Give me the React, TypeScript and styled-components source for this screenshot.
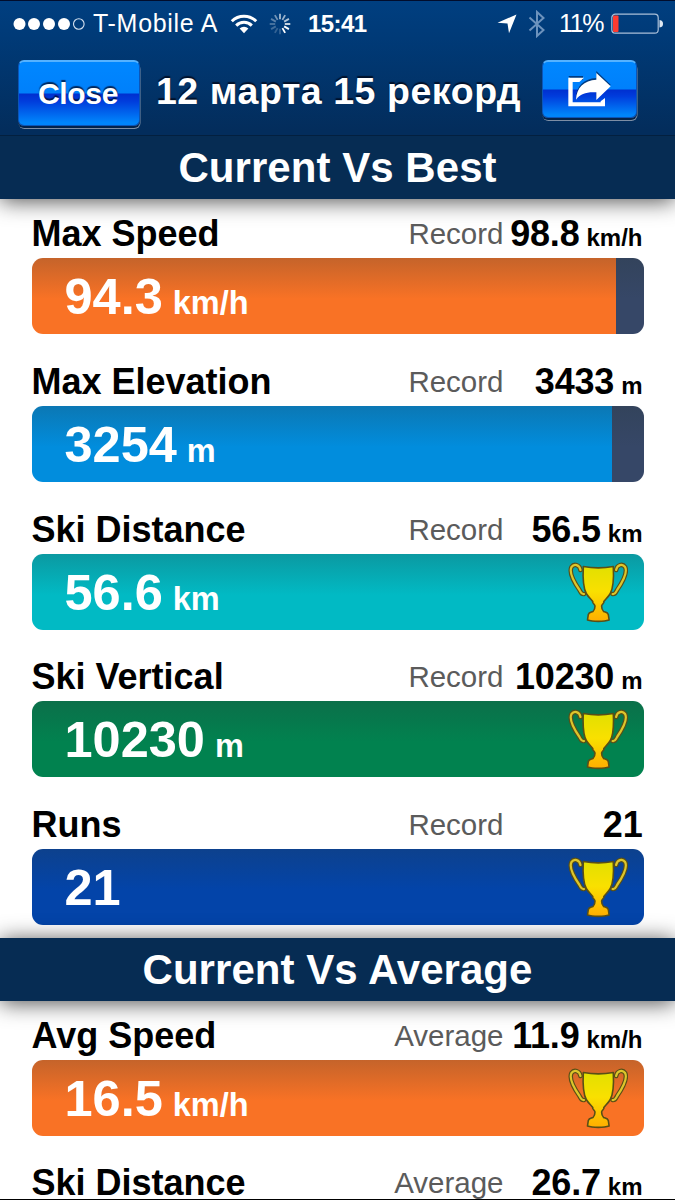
import React from 'react';
import styled, { createGlobalStyle } from 'styled-components';

const GlobalStyle = createGlobalStyle`
  * { box-sizing: border-box; }
  body { margin: 0; background: #fff; }
`;

const Screen = styled.main`
  width: 675px;
  height: 1200px;
  overflow: hidden;
  background: #fff;
  border-top: 1px solid #010d2c;
  border-bottom: 1px solid #000;
  font-family: 'Liberation Sans', Arial, sans-serif;
  display: flex;
  flex-direction: column;
`;

const TopArea = styled.header`
  flex: none;
  height: 135.4px;
  position: relative;
  z-index: 2;
  background: linear-gradient(#003f80, #003a77 28%, #032d5c 96%);
  border-bottom: 1px solid #03203f;
  color: #fff;
`;

const StatusBar = styled.div`
  height: 45px;
  display: flex;
  align-items: center;
  padding: 0 12px 0 13px;
  svg { flex: none; }
`;

const StatusText = styled.span<{ $width: number; $ml: number; $size?: number; $spacing?: number; $bold?: boolean }>`
  flex: none;
  width: ${p => p.$width}px;
  margin-left: ${p => p.$ml}px;
  font-size: ${p => p.$size ?? 25}px;
  font-weight: ${p => (p.$bold ? 700 : 400)};
  letter-spacing: ${p => p.$spacing ?? 0}px;
  white-space: nowrap;
`;

const Spacer = styled.span`
  flex: 1;
`;

const BatteryGap = styled.span`
  width: 6px;
`;

const NavBar = styled.div`
  display: flex;
  align-items: flex-start;
  padding: 14px 38px 0 18px;
`;

const GlossyButton = styled.button<{ $width: number; $height: number }>`
  flex: none;
  width: ${p => p.$width}px;
  height: ${p => p.$height}px;
  padding: 0;
  border: 1px solid #0b55b8;
  border-top: 2px solid #55b2ff;
  border-radius: 6px;
  background: linear-gradient(#0087ff 0, #0080fb 49%, #0030d0 51%, #003cdc 62%, #0085fb 96%);
  box-shadow: 0 2px 0 #04234a, 0.5px 3px 0 #7d8ea5;
  color: #fff;
  display: flex;
  align-items: center;
  justify-content: center;
  font: bold 30px 'Liberation Sans', Arial, sans-serif;
  letter-spacing: -0.3px;
  text-shadow: 0 -2px 1px rgba(0, 10, 40, 0.75);
`;

const ButtonLabel = styled.span`
  padding-right: 2px;
`;

const NavTitle = styled.h1`
  flex: 1;
  margin: 9px 0 0;
  padding-right: 5px;
  font-size: 37.5px;
  line-height: 44px;
  font-weight: 700;
  text-align: center;
  white-space: nowrap;
  letter-spacing: 0.55px;
  text-shadow: 0 -2px 1px rgba(0, 10, 30, 0.85);
`;

const SectionTitle = styled.h2`
  flex: none;
  height: 63px;
  margin: 0;
  background: #062c53;
  color: #fff;
  font-size: 42px;
  line-height: 63px;
  letter-spacing: 0.05px;
  text-align: center;
  position: relative;
  box-shadow: 0 2px 22px rgba(0, 0, 0, 0.7);
`;

const MetricList = styled.section`
  flex: none;
  padding: 9px 31.5px 13px;
  display: flex;
  flex-direction: column;
  gap: 21.6px;
`;

const MetricHead = styled.div`
  height: 50px;
  display: grid;
  grid-template-columns: 1fr auto 139px;
  align-items: baseline;
  line-height: 51.5px;
  white-space: nowrap;
  padding-right: 1px;
`;

const MetricName = styled.span`
  font-size: 36px;
  font-weight: 700;
  color: #000;
`;

const CompareLabel = styled.span`
  position: relative;
  top: -2px;
  font-size: 29.5px;
  color: #5b5b5b;
`;

const CompareValue = styled.span`
  display: flex;
  justify-content: flex-end;
  align-items: baseline;
  gap: 7px;
  font-size: 36px;
  letter-spacing: -0.2px;
  font-weight: 700;
  color: #000;
  small {
    font-size: 24px;
    letter-spacing: 0;
  }
`;

const Bar = styled.div<{ $color: string; $fill: number }>`
  height: 76px;
  border-radius: 11px;
  background:
    linear-gradient(rgba(42, 56, 58, 0.25), rgba(42, 56, 58, 0) 54%),
    linear-gradient(90deg, ${p => p.$color} ${p => p.$fill}%, #364767 ${p => p.$fill}%);
  display: flex;
  align-items: center;
  justify-content: space-between;
  padding: 0 16px 0 33px;
`;

const BarValue = styled.span`
  display: flex;
  align-items: baseline;
  gap: 10px;
  font-size: 50.5px;
  line-height: 76px;
  font-weight: 700;
  color: #fff;
  padding-top: 2px;
  small {
    font-size: 32.5px;
    line-height: 32px;
  }
`;

const SignalDots = () => (
  <svg width="73" height="14" viewBox="0 0 73 14" fill="#fff">
    {[6.5, 21, 36, 51].map(x => <circle key={x} cx={x} cy="7" r="6" />)}
    <circle cx="65.8" cy="7" r="5.3" fill="none" stroke="#d5e2f0" strokeWidth="1.1" />
  </svg>
);

const WifiSvg = styled.svg`
  margin-left: 10px;
`;

const WifiIcon = () => (
  <WifiSvg width="28" height="20" viewBox="0 0 28 20" fill="none" stroke="#fff" strokeWidth="3">
    <path d="M1.800 7.200a17.300 17.300 0 0 1 24.400 0" />
    <path d="M6.200 11.600a11 11 0 0 1 15.600 0" />
    <path d="M14 19.200l-4.400-4.600a6.200 6.200 0 0 1 8.800 0z" fill="#fff" stroke="none" />
  </WifiSvg>
);

const SpinnerSvg = styled.svg`
  margin-left: 11px;
`;

const SpinnerIcon = () => (
  <SpinnerSvg width="22" height="22" viewBox="-11 -11 22 22" stroke="#fff" strokeWidth="1.8">
    {[0.65, 0.6, 0.7, 0.85, 1, 1, 0.2, 0.2, 0.25, 0.3, 0.35, 0.45].map((o, i) => (
      <line key={i} x1="0" y1="-4.8" x2="0" y2="-10.3" opacity={o} transform={`rotate(${i * 30})`} />
    ))}
  </SpinnerSvg>
);

const LocationIcon = () => (
  <svg width="20" height="20" viewBox="0 0 20 20" fill="#fff">
    <path d="M19.500 .5L12 19.200 10.500 9.500 .5 8.700z" />
  </svg>
);

const BluetoothSvg = styled.svg`
  margin-left: 11px;
`;

const BluetoothIcon = () => (
  <BluetoothSvg width="18" height="28" viewBox="0 0 18 28" fill="none" stroke="#6d93bd" strokeWidth="2">
    <path d="M1.500 7.500l14 12.500-6.500 6V2l6.500 6-14 12.500" />
  </BluetoothSvg>
);

const BatteryIcon = () => (
  <svg width="52" height="22" viewBox="0 0 52 22">
    <rect x=".8" y="1.2" width="46.4" height="19" rx="3.5" fill="none" stroke="#a9bfd8" strokeWidth="1.2" />
    <rect x="2" y="2.4" width="5.5" height="16.6" rx="1" fill="#ff3b30" />
    <path d="M48.500 7v7.600c3-.5 3.500-2 3.500-3.800s-.5-3.300-3.500-3.800z" fill="#dfe8f2" />
  </svg>
);

const ShareIcon = () => (
  <svg width="44" height="37" viewBox="697 212 132 111">
    <g fill="#02163f" opacity=".65" transform="translate(0 -5)">
      <path d="M782 217l43 41-43 41v-23c-28-2-48 4-61 22 1-36 24-58 61-60z" />
      <path d="M698 232h44v12h-15v5h-15z" />
    </g>
    <g fill="#fff">
      <path d="M745 232h-47v86h110v-25l-13 10v3h-84v-61h20z" />
      <path d="M782 218l43 40-43 41v-23c-28-2-48 4-61 22 1-36 24-58 61-60z" />
    </g>
  </svg>
);

const TrophyIcon = () => (
  <svg width="60" height="62" viewBox="-1 -1.5 60 62">
    <defs>
      <linearGradient id="gold" x1="0" y1="0" x2="0" y2="1">
        <stop offset="0" stopColor="#e2e000" />
        <stop offset=".45" stopColor="#f9e000" />
        <stop offset="1" stopColor="#ffae00" />
      </linearGradient>
    </defs>
    {['', 'translate(58.6 0) scale(-1 1)'].map(t => (
      <g key={t} transform={t} fill="none" strokeLinecap="round">
        <path d="M11.500 7.500C10.500 2 5 1 2.500 4.500-.3 10 6 21 10.500 27.500c1.500 2.500 1.800 4.500 4.500 4" stroke="#594f16" strokeWidth="4.600" />
        <path d="M11.500 7.500C10.500 2 5 1 2.500 4.500-.3 10 6 21 10.500 27.500c1.500 2.500 1.800 4.500 4.500 4" stroke="#ddc62b" strokeWidth="2.200" />
      </g>
    ))}
    <path
      d="M14.300 4c9 1.600 21 1.600 30 0 .6 12 .4 21-3 27-2 3.500-4.500 5.500-6.500 8 1 1.500-2 2.500-2.200 4.500 0 3 .5 4 2 5.500 2.500.8 4.200 1 4.700 3l.8 5.500c-5 1.800-16.600 1.800-21.600 0l.8-5.500c.5-2 2.200-2.200 4.700-3 1.500-1.500 2-2.500 2-5.500-.2-2-3.200-3-2.200-4.500-2-2.500-4.500-4.500-6.500-8-3.400-6-3.600-15-3-27z"
      fill="url(#gold)"
      stroke="#594f16"
      strokeWidth="1.600"
      strokeLinejoin="round"
    />
  </svg>
);

type Metric = {
  name: string;
  value?: string;
  unit?: string;
  reference: string;
  color: string;
  fill?: number;
};

const best: Metric[] = [
  { name: 'Max Speed', value: '94.3', unit: 'km/h', reference: '98.8', color: '#f97225', fill: 95.5 },
  { name: 'Max Elevation', value: '3254', unit: 'm', reference: '3433', color: '#018ddd', fill: 94.7 },
  { name: 'Ski Distance', value: '56.6', unit: 'km', reference: '56.5', color: '#01bac4' },
  { name: 'Ski Vertical', value: '10230', unit: 'm', reference: '10230', color: '#01824f' },
  { name: 'Runs', value: '21', reference: '21', color: '#0344a9' },
];

const average: Metric[] = [
  { name: 'Avg Speed', value: '16.5', unit: 'km/h', reference: '11.9', color: '#f97225' },
  { name: 'Ski Distance', reference: '26.7', unit: 'km', color: '#01bac4' },
];

const MetricRow = ({ metric, label }: { metric: Metric; label: string }) => (
  <div>
    <MetricHead>
      <MetricName>{metric.name}</MetricName>
      <CompareLabel>{label}</CompareLabel>
      <CompareValue>
        {metric.reference}
        {metric.unit && <small>{metric.unit}</small>}
      </CompareValue>
    </MetricHead>
    {metric.value && (
      <Bar $color={metric.color} $fill={metric.fill ?? 100}>
        <BarValue>
          {metric.value}
          {metric.unit && <small>{metric.unit}</small>}
        </BarValue>
        {metric.fill === undefined && <TrophyIcon />}
      </Bar>
    )}
  </div>
);

export default function App() {
  return (
    <>
      <GlobalStyle />
      <Screen>
        <TopArea>
          <StatusBar>
            <SignalDots />
            <StatusText $width={127} $ml={7} $spacing={0.7}>T-Mobile A</StatusText>
            <WifiIcon />
            <SpinnerIcon />
            <StatusText $width={62} $ml={17} $size={24} $bold $spacing={-0.6}>15:41</StatusText>
            <Spacer />
            <LocationIcon />
            <BluetoothIcon />
            <StatusText $width={46} $ml={13} $spacing={-1.4}>11%</StatusText>
            <BatteryGap />
            <BatteryIcon />
          </StatusBar>
          <NavBar>
            <GlossyButton $width={122} $height={66}>
              <ButtonLabel>Close</ButtonLabel>
            </GlossyButton>
            <NavTitle>12 марта 15 рекорд</NavTitle>
            <GlossyButton $width={95} $height={58} aria-label="Share">
              <ShareIcon />
            </GlossyButton>
          </NavBar>
        </TopArea>
        <SectionTitle>Current Vs Best</SectionTitle>
        <MetricList>
          {best.map(m => <MetricRow key={m.name} metric={m} label="Record" />)}
        </MetricList>
        <SectionTitle>Current Vs Average</SectionTitle>
        <MetricList>
          {average.map(m => <MetricRow key={m.name} metric={m} label="Average" />)}
        </MetricList>
      </Screen>
    </>
  );
}
